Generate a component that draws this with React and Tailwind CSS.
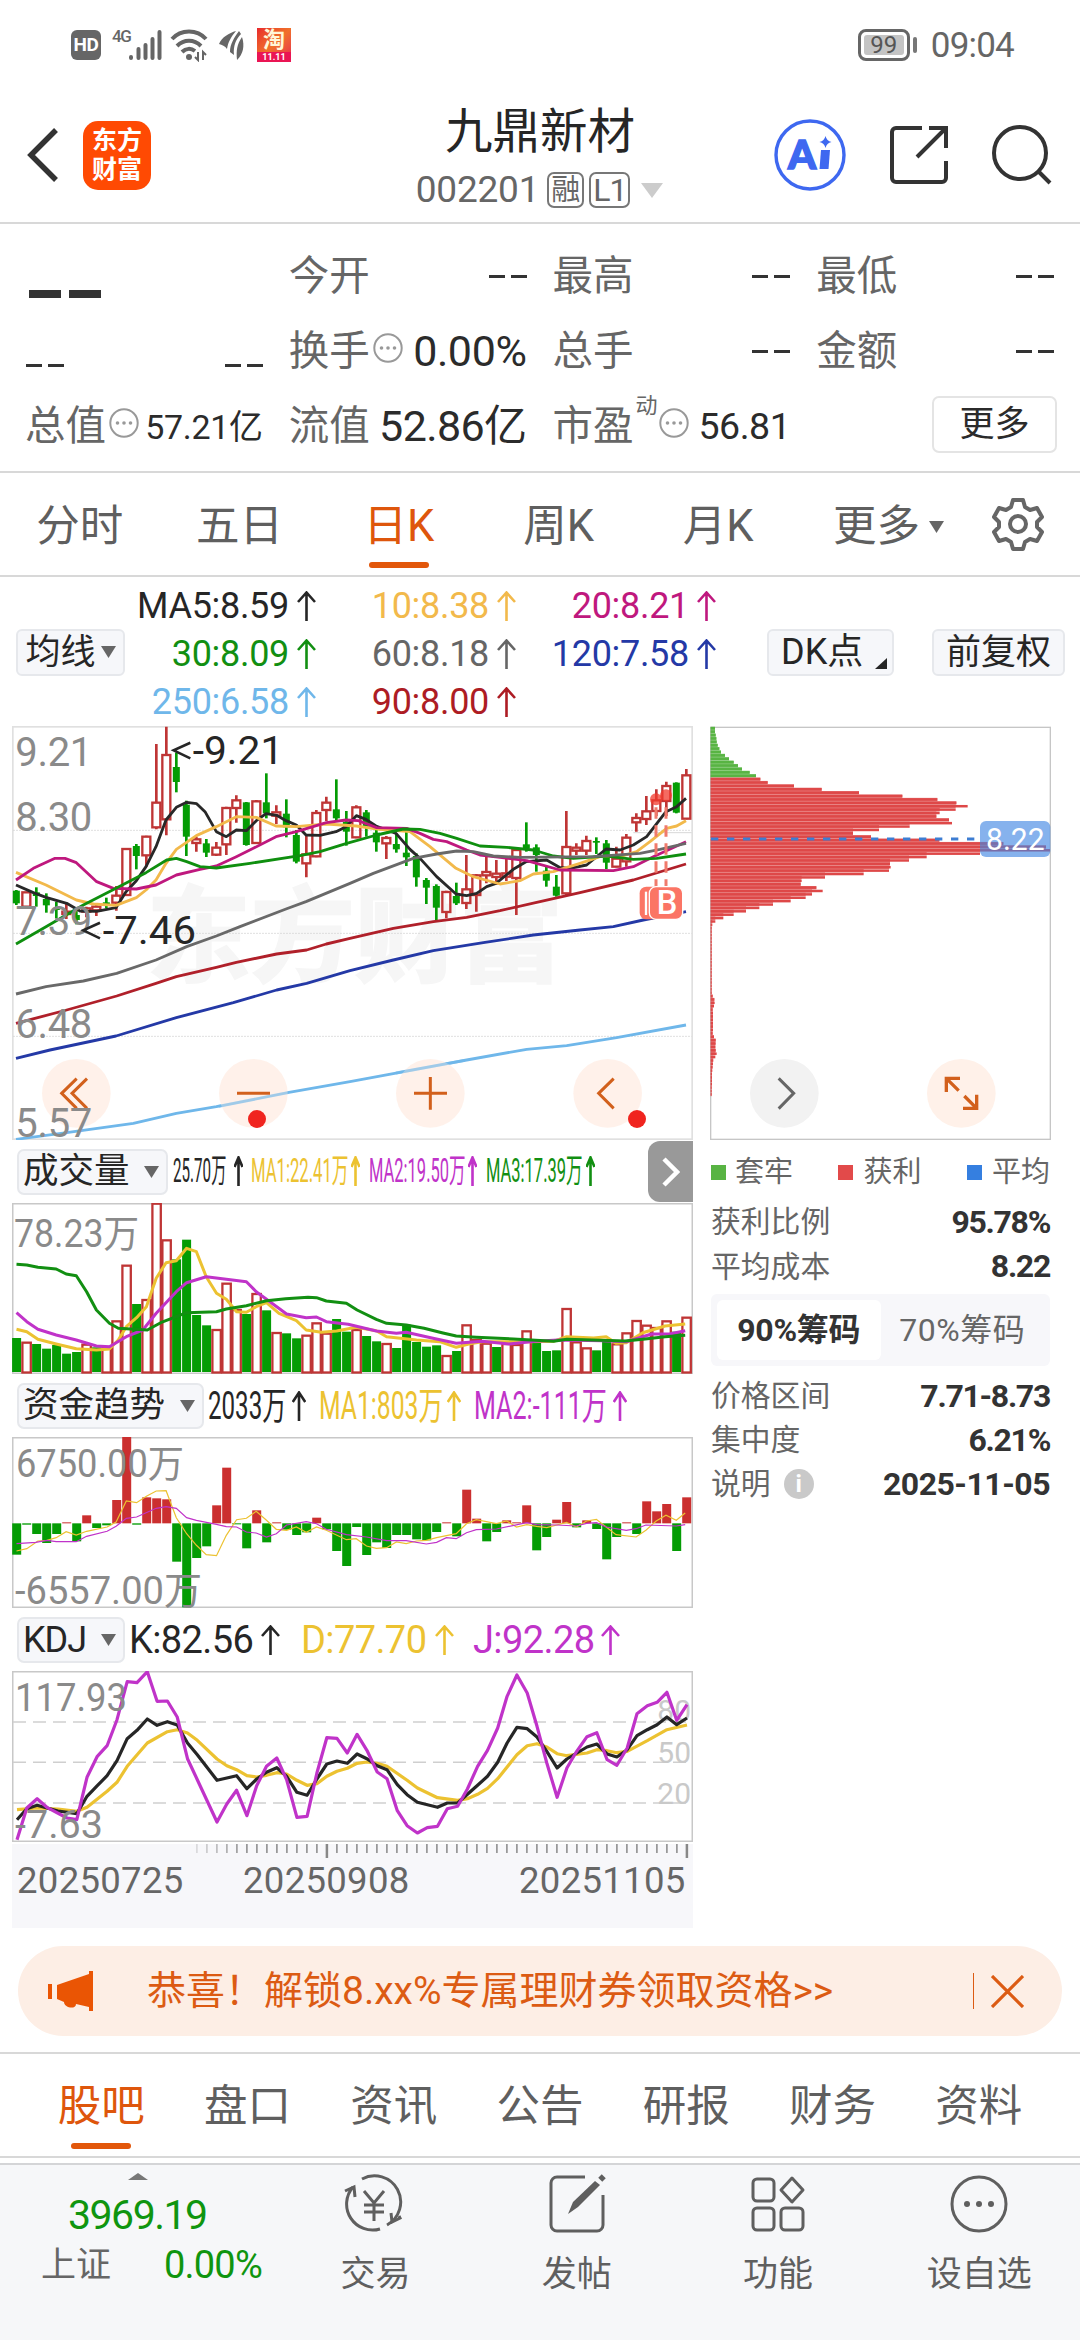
import React from 'react';
import clsx from 'clsx';

const RED = '#bf3535';
const GREEN = '#049c04';

// [up, high, bodyTop, bodyBottom, low]
const CANDLES = [
  [0, 510, 512, 550, 555], [1, 517, 517, 560, 560], [0, 502, 517, 528, 560], [0, 520, 537, 556, 578],
  [0, 545, 565, 570, 595], [1, 552, 575, 582, 597], [0, 565, 585, 600, 613], [1, 560, 565, 575, 592],
  [1, 555, 560, 571, 588], [0, 533, 547, 556, 565], [1, 498, 527, 548, 572], [1, 384, 387, 525, 527],
  [0, 372, 378, 408, 448], [1, 347, 350, 406, 440], [1, 72, 248, 322, 328], [1, 20, 105, 298, 346],
  [0, 98, 141, 186, 217], [0, 242, 254, 350, 408], [1, 350, 358, 369, 395], [0, 357, 370, 398, 411],
  [1, 366, 383, 404, 408], [1, 260, 264, 373, 405], [1, 226, 241, 264, 308], [0, 246, 247, 375, 377],
  [1, 240, 244, 369, 371], [0, 160, 247, 280, 295], [1, 256, 277, 287, 312], [0, 238, 281, 322, 352],
  [0, 330, 345, 425, 430], [1, 345, 403, 430, 472], [1, 270, 279, 409, 412], [1, 230, 248, 270, 303],
  [0, 178, 268, 295, 300], [0, 273, 305, 335, 377], [1, 256, 262, 352, 355], [0, 270, 277, 320, 350],
  [0, 325, 338, 367, 395], [1, 348, 354, 370, 417], [0, 340, 372, 388, 398], [0, 328, 398, 412, 438],
  [0, 400, 408, 472, 500], [0, 474, 480, 503, 552], [0, 493, 498, 563, 600], [1, 512, 516, 576, 595],
  [0, 488, 528, 550, 555], [1, 405, 508, 549, 567], [1, 462, 466, 525, 575], [1, 410, 456, 466, 490],
  [1, 420, 461, 471, 495], [1, 415, 460, 470, 483], [1, 388, 390, 474, 585], [0, 307, 373, 385, 395],
  [0, 373, 382, 405, 455], [0, 440, 452, 482, 500], [0, 465, 500, 527, 530], [1, 273, 381, 520, 525],
  [1, 370, 383, 392, 405], [1, 347, 363, 392, 405], [0, 352, 363, 368, 402], [0, 360, 370, 428, 447],
  [1, 380, 416, 440, 442], [1, 342, 353, 424, 440], [1, 280, 294, 307, 335], [1, 228, 274, 297, 315],
  [1, 208, 241, 273, 288], [1, 185, 198, 243, 288], [0, 187, 188, 278, 280], [1, 147, 166, 296, 298],
];

const MA_LINES = [
  ['#6fb7ea', '48,1258 200,1238 400,1210 529,1180 649,1160 850,1120 1050,1085 1200,1057 1400,1020 1580,988 1700,977 1850,953 2058,915'],
  ['#2439a6', '48,1015 150,990 348,948 529,893 700,848 830,810 920,790 1050,752 1180,720 1300,692 1450,668 1600,645 1740,630 1840,620 1930,600 2058,575'],
  ['#b0202a', '48,910 200,870 350,828 468,790 529,770 649,742 709,727 830,702 920,690 979,672 1050,655 1180,625 1300,605 1400,592 1500,572 1620,545 1740,518 1900,480 2058,432'],
  ['#282828', '48,495 100,518 138,532 200,550 240,573 290,574 348,563 378,515 409,482 438,440 468,380 498,300 529,262 560,247 590,251 615,275 649,335 679,350 709,330 739,332 769,302 798,281 830,286 858,302 889,315 918,345 960,346 1008,335 1038,320 1069,287 1098,298 1128,318 1188,340 1230,388 1260,415 1310,470 1368,522 1400,527 1430,520 1460,500 1488,490 1540,448 1578,425 1640,420 1678,442 1710,445 1760,435 1818,387 1860,390 1900,375 1940,350 1998,275 2030,260 2058,235'],
  ['#f2b94b', '48,457 138,495 229,540 280,552 348,556 409,533 438,510 468,480 498,430 529,388 589,347 649,320 709,290 769,292 828,318 889,320 979,312 1069,318 1138,328 1230,335 1290,380 1368,445 1420,470 1500,492 1560,482 1600,462 1660,455 1740,430 1800,410 1860,410 1910,395 1950,365 2000,325 2030,318 2058,302'],
  ['#bf187e', '48,480 100,445 165,415 195,415 229,428 290,485 340,505 409,507 468,495 529,465 600,448 649,438 709,410 760,385 828,350 889,335 979,308 1038,300 1075,302 1130,323 1220,325 1260,340 1300,358 1340,365 1400,390 1440,405 1500,412 1580,422 1680,450 1840,452 1900,440 1960,410 2058,365'],
  ['#0f8f0f', '48,672 138,620 250,555 348,505 438,458 500,420 529,415 560,425 600,440 649,444 750,430 900,407 960,395 1040,370 1130,345 1210,327 1260,328 1320,340 1370,355 1440,378 1520,382 1600,390 1660,408 1720,415 1820,408 1900,418 1970,415 2058,402'],
  ['#696969', '48,822 138,800 250,783 350,760 468,720 560,680 649,648 720,620 858,567 918,545 1050,490 1120,460 1240,415 1310,402 1370,393 1420,395 1480,408 1560,412 1780,410 1920,400 1980,388 2058,370'],
];

const CHIPS = [
  45, 45, 47, 49, 50, 53, 58, 63, 75, 87, 101, 114, 126, 149, 168,
  181, 203, 282, 365, 477, 607, 712, 769, 803, 767, 719, 709, 747, 756, 629, 537, 459, 513, 718, 910, 1038, 1050,
  840, 680, 627, 570, 572, 567, 491, 375, 305, 302, 349, 368, 336, 317, 272, 219, 178, 138, 101, 70, 46, 37,
  35, 35, 35, 35, 35, 35, 35, 35, 35, 35, 35, 35, 35, 35, 35, 35, 35, 35, 35, 35, 38, 43, 44, 42, 38, 39, 39, 39,
  39, 39, 39, 38, 42, 47, 47, 46, 47, 50, 46, 40, 39, 38, 37, 36, 36, 36, 36, 35, 35, 35,
];

// negative = falling day
const VOLUME = [
  -594, 605, -612, -626, -615, -641, -636, 611, -622, 618, 541, 374, -492, 477, 188, 298, -358, -299, -525, -556,
  567, 428, 507, -522, 459, -511, 576, -580, -595, 584, 547, 578, -537, -575, 567, -588, -604, 609, -624, -554,
  -606, -620, -616, 645, -633, 553, 597, 608, -621, 609, 612, 571, -606, -633, -631, 504, 604, 622, -631, -604,
  610, 577, 540, 554, 561, 541, -575, 530,
];
const VOLUME_LINES = [
  ['#ecc231', [37,568, 60,575, 85,598, 126,612, 171,626, 216,630, 245,627, 265,600, 283,560, 306,533, 328,500, 350,415, 372,368, 395,362, 418,325, 440,335, 462,410, 485,460, 507,478, 530,515, 552,517, 574,500, 597,488, 625,520, 664,542, 686,570, 720,577, 754,573, 798,562, 843,572, 866,590, 933,600, 985,605, 1022,622, 1050,612, 1080,605, 1180,605, 1240,604, 1269,590, 1330,594, 1358,590, 1380,610, 1403,608, 1440,578, 1490,558, 1535,552]],
  ['#c033c9', [37,518, 60,545, 85,568, 126,585, 171,600, 216,618, 245,620, 283,590, 320,570, 350,520, 395,455, 418,428, 462,410, 507,418, 552,425, 574,455, 597,478, 642,522, 686,533, 709,531, 731,545, 780,553, 843,573, 888,580, 910,577, 970,595, 1022,610, 1080,604, 1140,612, 1200,604, 1250,600, 1350,602, 1403,605, 1460,582, 1500,582, 1535,572]],
  ['#128f12', [37,373, 60,375, 85,382, 126,387, 148,402, 171,407, 194,455, 216,510, 245,550, 265,565, 330,570, 360,548, 418,518, 485,515, 507,507, 552,497, 597,482, 640,476, 690,472, 709,473, 731,483, 776,490, 800,510, 843,538, 866,550, 910,555, 950,565, 990,578, 1022,588, 1067,592, 1150,597, 1240,604, 1270,598, 1400,603, 1440,598, 1490,590, 1535,586]],
];

const FUND = [
  373, 283, 311, 338, 311, 276, 333, 255, 293, 285, 209, 20, 283, 201, 204, 207, 394, 531, 383, 348, 225, 112, 282,
  354, 240, 336, 276, 298, 314, 306, 262, 297, 362, 407, 290, 374, 336, 353, 314, 314, 327, 330, 305, 276, 318, 178,
  265, 333, 305, 270, 276, 225, 360, 320, 268, 215, 291, 270, 296, 387, 320, 276, 311, 213, 243, 221, 362, 201,
];
const FUND_LINES = [
  ['#ecc231', [37,362, 60,355, 85,332, 105,330, 126,322, 148,304, 171,314, 194,303, 240,290, 260,275, 283,212, 306,217, 328,198, 350,182, 372,181, 395,262, 418,310, 440,345, 462,373, 485,376, 507,315, 530,268, 552,264, 574,243, 597,270, 619,297, 642,300, 664,290, 686,306, 709,290, 731,300, 776,328, 798,325, 821,347, 843,354, 866,352, 888,335, 910,340, 933,332, 955,330, 978,322, 1022,310, 1045,280, 1067,268, 1112,280, 1135,272, 1157,290, 1180,283, 1202,288, 1225,292, 1269,276, 1291,290, 1314,272, 1336,267, 1358,290, 1380,313, 1425,320, 1447,300, 1470,272, 1492,255, 1515,270, 1535,248]],
  ['#c033c9', [37,340, 80,336, 105,330, 126,334, 171,334, 194,318, 240,303, 260,288, 283,264, 306,260, 350,234, 372,229, 395,234, 418,262, 440,270, 485,282, 507,289, 530,290, 552,305, 574,308, 597,320, 619,310, 642,284, 686,274, 709,280, 731,297, 776,313, 821,320, 866,331, 910,331, 955,341, 978,336, 1000,322, 1022,325, 1045,307, 1067,298, 1112,296, 1180,277, 1202,283, 1247,284, 1291,287, 1314,279, 1336,277, 1358,290, 1403,300, 1425,295, 1447,284, 1515,287, 1535,283]],
];

const KDJ_LINES = [
  ['#ecc231', [38,450, 83,445, 130,448, 172,455, 195,443, 240,395, 262,368, 285,320, 330,250, 375,216, 397,210, 420,220, 442,242, 486,298, 508,318, 530,330, 553,348, 575,352, 597,347, 620,339, 642,343, 665,362, 688,377, 710,372, 732,350, 755,335, 778,326, 800,311, 822,307, 845,311, 867,320, 912,362, 935,385, 980,414, 1025,422, 1047,417, 1070,404, 1092,386, 1115,357, 1158,285, 1181,258, 1203,252, 1225,262, 1248,282, 1270,288, 1315,280, 1337,270, 1360,273, 1382,279, 1405,275, 1450,243, 1494,210, 1539,196]],
  ['#262626', [38,480, 60,447, 83,437, 130,454, 172,462, 195,410, 218,378, 240,348, 262,303, 285,237, 307,212, 330,178, 352,197, 375,186, 397,196, 420,250, 442,285, 486,362, 530,348, 553,387, 575,358, 597,338, 620,324, 642,350, 665,398, 688,407, 710,358, 732,313, 755,304, 778,311, 800,283, 822,297, 845,318, 867,330, 890,375, 912,405, 935,428, 980,443, 1002,430, 1025,430, 1070,377, 1092,350, 1115,308, 1136,250, 1158,203, 1181,207, 1203,232, 1225,275, 1248,325, 1270,298, 1315,262, 1337,253, 1360,283, 1382,292, 1405,270, 1427,228, 1450,210, 1472,195, 1494,172, 1516,195, 1539,175]],
  ['#c033c9', [38,540, 60,445, 83,417, 105,443, 150,475, 172,480, 195,353, 218,290, 240,258, 262,180, 285,66, 307,69, 330,36, 352,125, 375,124, 397,172, 420,297, 442,360, 486,487, 508,433, 530,392, 553,468, 575,378, 597,320, 620,295, 642,360, 665,473, 688,470, 710,340, 732,234, 755,236, 778,280, 800,224, 822,272, 845,337, 867,357, 890,453, 912,498, 935,520, 957,504, 980,500, 1002,447, 1025,440, 1047,388, 1070,320, 1092,272, 1115,205, 1136,110, 1158,46, 1181,100, 1203,200, 1225,310, 1248,413, 1270,325, 1292,275, 1315,231, 1337,219, 1360,300, 1382,317, 1405,265, 1427,162, 1450,138, 1472,128, 1494,98, 1516,182, 1539,135]],
];

// data units -> px inside a 681x171 indicator pane
const toPx = (pts, top) => {
  const out = [];
  for (let i = 0; i < pts.length; i += 2) {
    out.push(`${(pts[i] * 0.4464 - 12).toFixed(1)},${((pts[i + 1] - top) / 3).toFixed(1)}`);
  }
  return out.join(' ');
};

const Up = ({ w = 19, h = 30 }) => (
  <svg width={w} height={h} viewBox="0 0 19 30" preserveAspectRatio="none" fill="none" stroke="currentColor" strokeWidth="2.6" className="shrink-0">
    <path d="M9.5 30V2M1 11l8.5-9.5L18 11" vectorEffect="non-scaling-stroke" />
  </svg>
);

const Down = ({ w = 15, h = 12, className }) => (
  <svg width={w} height={h} viewBox="0 0 15 12" preserveAspectRatio="none" className={clsx('shrink-0', className)} fill="currentColor">
    <path d="M0 0h15L7.5 12z" />
  </svg>
);

const Dots = () => (
  <svg width="30" height="30" viewBox="0 0 30 30" className="shrink-0 text-[#999]" fill="currentColor">
    <circle cx="15" cy="15" r="13.7" fill="none" stroke="currentColor" strokeWidth="2" />
    <circle cx="8.5" cy="15" r="1.8" /><circle cx="15" cy="15" r="1.8" /><circle cx="21.5" cy="15" r="1.8" />
  </svg>
);

const StatusBar = () => (
  <div className="h-[86px] flex items-center justify-between pl-[71px] pr-[66px] pt-1 text-[#666]">
    <div className="flex items-center">
      <span className="w-[30px] h-[30px] rounded-[6px] bg-[#666] text-white text-[19px] font-bold flex items-center justify-center tracking-[-0.5px]">HD</span>
      <span className="ml-[11px] w-[18px] -mt-[18px] text-[17px] leading-none font-medium tracking-[-1.5px]">4G</span>
      <svg width="34" height="32" viewBox="0 0 34 32" className="-ml-[2px]" stroke="#666" strokeWidth="4" strokeLinecap="round">
        <path d="M3 29v-1M10.5 29v-9M17.5 29V16M24.5 29V10M31.5 29V3" />
      </svg>
      <svg width="38" height="34" viewBox="0 0 38 34" className="ml-[8px]" fill="none" stroke="#666" strokeWidth="4">
        <path d="M2 11C11 1 27 1 36 11M7 18c7-7 17-7 24 0M12 24c4-4 9-4 13-1" />
        <circle cx="19" cy="29" r="3" fill="#666" stroke="none" />
        <path d="M28 24v8l-3-3M33 32v-8l3 3" strokeWidth="2" />
      </svg>
      <svg width="26" height="30" viewBox="0 0 26 30" className="ml-[11px]" fill="#666">
        <path d="M0 14C3 7 10 3 17 1 12 7 9 12 8 19c-2-3-5-4-8-5z" />
        <path d="M20 1C15 8 11 14 11 22l4 3C14 16 17 9 22 4z" />
        <path d="M23 7c-5 7-6 14-5 23 6-6 8-14 5-23z" />
      </svg>
      <div className="ml-[12px] w-[34px] h-[34px] bg-gradient-to-br from-[#e8252c] via-[#f0702a] to-[#e6194b] flex flex-col items-center overflow-hidden">
        <span className="text-[22px] leading-[24px] font-bold text-[#fff6d8]">淘</span>
        <span className="w-full bg-[#ea1554] text-white text-[9px] leading-[10px] text-center font-bold">11.11</span>
      </div>
    </div>
    <div className="flex items-center">
      <div className="w-[52px] h-[32px] rounded-[8px] border-[3px] border-[#666] p-[3px]">
        <div className="w-full h-full bg-[#c4c4c4] rounded-[3px] text-[24px] leading-none flex items-center justify-center text-[#555]">99</div>
      </div>
      <span className="w-[4px] h-[16px] bg-[#777] ml-[3px] rounded-sm" />
      <span className="ml-[14px] text-[35px] leading-none tracking-[-0.8px]">09:04</span>
    </div>
  </div>
);

const Header = () => (
  <header className="h-[138px] border-b-2 border-[#d8d8d8] flex items-center pl-[27px] pr-[28px] relative">
    <svg width="31" height="54" viewBox="0 0 31 54" fill="none" stroke="#333" strokeWidth="5.5" className="mt-[2px]">
      <path d="M29 2L4 27l25 25" />
    </svg>
    <div className="ml-[25px] mt-[2px] w-[68px] h-[69px] rounded-[15px] bg-[#ff4a03] text-white font-bold text-[25px] leading-[29px] flex flex-col items-center justify-center">
      <span>东方</span><span>财富</span>
    </div>
    <div className="absolute left-[340px] w-[400px] top-[17px] flex flex-col items-center">
      <h1 className="text-[47.5px] leading-[58px] text-[#262626]">九鼎新材</h1>
      <div className="flex items-center text-[#666] h-[58px] -ml-[1px]">
        <span className="text-[37px] tracking-[-0.2px]">002201</span>
        <span className="ml-[8px] w-[37px] h-[36px] rounded-[7px] border-2 border-[#777] text-[29px] leading-none flex items-center justify-center">融</span>
        <span className="ml-[5px] w-[41px] h-[36px] rounded-[7px] border-2 border-[#777] text-[32px] leading-none flex items-center justify-center tracking-[-1px]">L1</span>
        <Down w={22} h={15} className="ml-[11px] text-[#ccc]" />
      </div>
    </div>
    <div className="ml-auto flex items-center gap-[43px] pt-[2px]">
      <svg width="72" height="72" viewBox="0 0 72 72">
        <circle cx="36" cy="36" r="34" fill="none" stroke="#3e68f0" strokeWidth="3.4" />
        <text x="14" y="50" fontSize="40" fontWeight="900" fontFamily="Lato, sans-serif" fill="#3e68f0" stroke="#3e68f0" strokeWidth="1.5">A</text>
        <path d="M47 31h9l-1.500 19h-9z" fill="#3e68f0" />
        <path d="M51.500 17q1.200 4.800 6 6-4.800 1.200-6 6-1.200-4.800-6-6 4.800-1.200 6-6z" fill="#3e68f0" />
      </svg>
      <svg width="60" height="60" viewBox="0 0 60 60" fill="none" stroke="#333" strokeWidth="4">
        <path d="M33 3H7a4 4 0 0 0-4 4v46a4 4 0 0 0 4 4h46a4 4 0 0 0 4-4V36M40 3h17v20M57 3L28 32" />
      </svg>
      <svg width="60" height="60" viewBox="0 0 60 60" fill="none" stroke="#333" strokeWidth="4">
        <circle cx="28" cy="28" r="26" /><path d="M46 46l12 12" />
      </svg>
    </div>
  </header>
);

const Label = ({ children }) => <span className="text-[40.5px] text-[#666] -ml-px">{children}</span>;
const Dash = () => <span className="flex gap-[6px]"><i className="w-[16px] h-[3px] bg-[#333]" /><i className="w-[16px] h-[3px] bg-[#333]" /></span>;

const Quote = () => (
  <section className="h-[249px] border-b-2 border-[#d8d8d8] px-[26px] pt-[15px] grid grid-cols-4 grid-rows-[75px_75px_75px] gap-x-[27px] content-start text-[#2b2b2b] leading-none whitespace-nowrap [&>div]:flex [&>div]:items-center">
    <div><span className="flex gap-[8px] ml-[3px] mt-[35px]"><i className="w-[32px] h-[8px] bg-[#333]" /><i className="w-[32px] h-[8px] bg-[#333]" /></span></div>
    <div className="justify-between"><Label>今开</Label><Dash /></div>
    <div className="justify-between"><Label>最高</Label><Dash /></div>
    <div className="justify-between"><Label>最低</Label><Dash /></div>

    <div className="justify-between pt-[28px]"><Dash /><Dash /></div>
    <div className="justify-between">
      <div className="flex items-center gap-[3px]"><Label>换手</Label><div className="-mt-[8px]"><Dots /></div></div>
      <span className="text-[43px] tracking-[-0.4px]">0.00%</span>
    </div>
    <div className="justify-between"><Label>总手</Label><Dash /></div>
    <div className="justify-between"><Label>金额</Label><Dash /></div>

    <div className="justify-between">
      <div className="flex items-center gap-[3px]"><Label>总值</Label><div className="-mt-[8px]"><Dots /></div></div>
      <span className="text-[34px] tracking-[-0.3px]">57.21亿</span>
    </div>
    <div className="justify-between"><Label>流值</Label><span className="text-[43px] tracking-[-0.6px]">52.86亿</span></div>
    <div className="justify-between">
      <div className="flex items-center"><Label>市盈</Label><span className="text-[22px] text-[#666] -mt-[42px] ml-[2px]">动</span><div className="-mt-[8px] ml-px"><Dots /></div></div>
      <span className="text-[37.5px] tracking-[-0.5px]">56.81</span>
    </div>
    <div className="justify-end">
      <button className="w-[125px] h-[57px] -mr-[3px] -mt-[4px] rounded-[7px] border-2 border-[#e4e4e4] text-[35px] leading-none flex items-center justify-center">更多</button>
    </div>
  </section>
);

const PeriodTabs = () => (
  <nav className="h-[104px] border-b-2 border-[#d8d8d8] flex items-center text-[43.5px] leading-none text-[#5f5f5f]">
    {['分时', '五日', '日K', '周K', '月K'].map((t) => (
      <div key={t} className={clsx('w-[159.6px] h-full flex items-center justify-center relative pt-[6px]', t === '日K' && 'text-[#de560c]')}>
        {t}
        {t === '日K' && <i className="absolute bottom-[7px] w-[60px] h-[6px] rounded-full bg-[#e2570b]" />}
      </div>
    ))}
    <div className="ml-[35px] pt-[6px] flex items-center gap-[9px]">更多<Down className="text-[#666]" /></div>
    <svg width="54" height="54" viewBox="0 0 54 54" className="ml-auto mr-[35px]" fill="none" stroke="#666" strokeWidth="4" strokeLinejoin="round">
      <path d="M22 3h10l2 7 5 3 7-2 5 9-5 5v5l5 5-5 9-7-2-5 3-2 7H22l-2-7-5-3-7 2-5-9 5-5v-5l-5-5 5-9 7 2 5-3z" />
      <circle cx="27" cy="27" r="8" />
    </svg>
  </nav>
);

const MAS = [
  ['MA5:8.59', 'text-[#262626]'], ['10:8.38', 'text-[#f2b94b]'], ['20:8.21', 'text-[#bf187e]'],
  ['30:8.09', 'text-[#128f12]'], ['60:8.18', 'text-[#666]'], ['120:7.58', 'text-[#2439a6]'],
  ['250:6.58', 'text-[#6fb7ea]'], ['90:8.00', 'text-[#ad1c24]'],
];

const MaBar = () => (
  <div className="h-[150px] flex items-center pl-[16px] pr-[15px] leading-none text-[#262626]">
    <button className="w-[109px] h-[47px] rounded-[6px] bg-[#f6f7fa] border-2 border-[#e6e8ec] flex items-center justify-center gap-[5px] text-[35px] leading-none">均线<Down className="text-[#666]" /></button>
    <div className="grid grid-cols-[191px_200px_200px] auto-rows-[48px] pt-[6px]">
      {MAS.map(([t, c]) => (
        <div key={t} className={clsx('flex items-center justify-end gap-[8px] text-[36px] tracking-[-0.3px] -mt-[3px]', c)}>{t}<Up /></div>
      ))}
    </div>
    <button className="ml-[51px] w-[127px] h-[47px] rounded-[6px] bg-[#f6f7fa] border-2 border-[#e6e8ec] text-[36px] leading-none flex items-center pl-[12px] relative whitespace-nowrap">
      DK点
      <svg width="12" height="11" className="absolute right-[5px] bottom-[5px]"><path d="M12 0v11H0z" fill="#262626" /></svg>
    </button>
    <button className="ml-auto w-[133px] h-[47px] rounded-[6px] bg-[#f6f7fa] border-2 border-[#e6e8ec] text-[35px] leading-none flex items-center justify-center whitespace-nowrap">前复权</button>
  </div>
);

const KChart = () => (
  <svg width="681" height="414" viewBox="36 18 2043 1242" fill="none">
    <rect x="38.500" y="20.500" width="2038" height="1237" stroke="#e0e0e0" strokeWidth="5" fill="#fff" />
    <text x="440" y="762" fontSize="312" fontWeight="700" fill="#f6f6f6" stroke="#f6f6f6" strokeWidth="8">东方财富</text>
    {[331, 640, 949].map((y) => <path key={y} d={`M40 ${y}H2075`} stroke="#cfcfcf" strokeWidth="3" strokeDasharray="4 5" />)}
    <path d="M1900 338H2075" stroke="#d8d8d8" strokeWidth="3" />
    {CANDLES.map(([up, hi, top, bot, lo], i) => {
      const x = 49 + i * 30;
      return up ? (
        <g key={i} stroke={RED} strokeWidth="7">
          <path d={`M${x} ${hi}V${top}M${x} ${bot}V${lo}`} strokeWidth="8" />
          <rect x={x - 12} y={top} width="24" height={bot - top} />
        </g>
      ) : (
        <g key={i} fill={GREEN}>
          <rect x={x - 4} y={hi} width="8" height={lo - hi} />
          <rect x={x - 10.5} y={top} width="21" height={bot - top} />
        </g>
      );
    })}
    {MA_LINES.map(([c, pts]) => <polyline key={c} points={pts} stroke={c} strokeWidth="8.500" strokeLinejoin="round" />)}
    <g fill="#ffefe6" fillOpacity="0.85">
      <circle cx="229" cy="1120" r="103" /><circle cx="760" cy="1120" r="103" />
      <circle cx="1291" cy="1120" r="103" /><circle cx="1823" cy="1120" r="103" />
    </g>
    <path d="M656 1159L864 1118M1188 1059L1394 1021" stroke="#6fb7ea" strokeWidth="8.500" strokeOpacity="0.600" />
    <g stroke="#d2601c" strokeWidth="9">
      <path d="M230 1076l-45 44 45 45M261 1076l-45 44 45 45" />
      <path d="M711 1120h99" />
      <path d="M1242 1120h99M1291 1071v98" />
      <path d="M1841 1076l-45 44 45 45" />
    </g>
    <circle cx="771" cy="1197" r="27" fill="#f0241f" />
    <circle cx="1911" cy="1197" r="27" fill="#f0241f" />

    <g fill="#8a8a8a" fontSize="120" letterSpacing="-1">
      <text x="46" y="138">9.21</text>
      <text x="46" y="334">8.30</text>
      <text x="46" y="645">7.39</text>
      <text x="46" y="953">6.48</text>
      <text x="46" y="1251">5.57</text>
    </g>
    <g fill="#262626" fontSize="118">
      <text x="578" y="132" textLength="272" lengthAdjust="spacingAndGlyphs">-9.21</text>
      <text x="308" y="672" textLength="280" lengthAdjust="spacingAndGlyphs">-7.46</text>
    </g>
    <path d="M571 68l-50 23 50 24M300 608l-50 23 50 24" stroke="#262626" strokeWidth="8" />

    <g stroke="#f07a6c" strokeWidth="9" strokeDasharray="34 20">
      <path d="M1968 262V500M1998 262V500" />
    </g>
    <g fill="#f2392c" fillOpacity="0.75"><circle cx="1968" cy="238" r="18" /><circle cx="1998" cy="226" r="18" /></g>
    <rect x="1919" y="500" width="98" height="98" rx="20" fill="#fb7565" />
    <path d="M1938 515v70" stroke="#fff" strokeWidth="7" />
    <rect x="1948" y="500" width="100" height="98" rx="20" fill="#fb7565" stroke="#fff" strokeWidth="4" />
    <text x="1970" y="583" fontSize="98" fontWeight="500" fill="#fff">B</text>
  </svg>
);

const ChipChart = () => (
  <svg width="342" height="414" viewBox="30 18 1026 1242" fill="none">
    <rect x="32" y="22" width="1019" height="1236" stroke="#c6c6c6" strokeWidth="4" />
    {CHIPS.map((w, i) => (
      <g key={i} fill={i < 15 ? '#58b443' : '#de4848'}>
        <rect x="32" y={20 + i * 10.17} width={Math.min(w, CHIPS[i + 1] || w) - 32} height="10.170" fillOpacity="0.75" />
        <rect x="32" y={21 + i * 10.17} width={w - 32} height="7.500" />
      </g>
    ))}
    <path d="M33 357H838" stroke="#3d7dd2" strokeWidth="9" strokeDasharray="22 26" />
    <rect x="840" y="303" width="211" height="108" rx="18" fill="#3f85e2" fillOpacity="0.630" />
    <text x="858" y="390" fontSize="94" textLength="176" lengthAdjust="spacingAndGlyphs" fill="#fff">8.22</text>
    <circle cx="253" cy="1120" r="103" fill="#f2f2f2" />
    <path d="M236 1075l45 45-45 46" stroke="#666" strokeWidth="9" />
    <circle cx="784" cy="1120" r="103" fill="#fff1e9" />
    <path d="M739 1116v-41h41M742 1078l34 34M830 1124v41h-41M827 1162l-34-34" stroke="#d2601c" strokeWidth="10" />
  </svg>
);

const Pane = ({ children }) => (
  <svg width="681" height="171" viewBox="0 0 681 171" fill="none" className="block">
    <rect x="0.750" y="0.750" width="679.500" height="169.500" stroke="#c8c8c8" strokeWidth="1.500" />
    {children}
  </svg>
);

const Select = ({ children, className }) => (
  <button className={clsx('h-[46px] rounded-[7px] bg-[#f6f7fa] border-2 border-[#e6e8ec] flex items-center justify-between pl-[4px] pr-[7px] text-[35.5px] leading-none whitespace-nowrap', className)}>
    {children}<Down className="text-[#666]" />
  </button>
);

// narrow text: keeps the glyph height while squeezing the width
const Squeezed = ({ children, scale, className, arrow = 14 }) => (
  <div className={clsx('flex items-center justify-between shrink-0', className)}>
    <div className="w-0"><span className={clsx('inline-block origin-left whitespace-nowrap', scale)}>{children}</span></div>
    <Up w={arrow} h={30} />
  </div>
);

const VolumePane = () => (
  <div>
    <div className="h-[63px] flex items-center pl-[5px] text-[#262626] leading-none relative">
      <Select className="w-[151px]">成交量</Select>
      <div className="flex text-[33px] -mt-[2px]">
        <Squeezed className="w-[70px] ml-[5px]" scale="scale-x-[0.46]" arrow={9}>25.70万</Squeezed>
        <Squeezed className="w-[109px] ml-[8px] text-[#ecc231]" scale="scale-x-[0.505]" arrow={9}>MA1:22.41万</Squeezed>
        <Squeezed className="w-[108px] ml-[9px] text-[#c033c9]" scale="scale-x-[0.5]" arrow={9}>MA2:19.50万</Squeezed>
        <Squeezed className="w-[109px] ml-[9px] text-[#128f12]" scale="scale-x-[0.5]" arrow={9}>MA3:17.39万</Squeezed>
      </div>
      <div className="absolute right-0 top-[1px] w-[45px] h-[61px] rounded-l-[12px] bg-[#999] flex items-center justify-center">
        <svg width="18" height="30" viewBox="0 0 18 30" fill="none" stroke="#fff" strokeWidth="4.500"><path d="M2 2l13 13L2 28" /></svg>
      </div>
    </div>
    <Pane>
      {VOLUME.map((v, i) => {
        const y = (Math.abs(v) - 189) / 3;
        const x = 4.6 + i * 10;
        return v > 0
          ? <rect key={i} x={x - 4.2} y={y + 1} width="8.400" height={168.500 - y} stroke={RED} strokeWidth="2.300" />
          : <rect key={i} x={x - 4.5} y={y} width="9" height={169 - y} fill={GREEN} />;
      })}
      {VOLUME_LINES.map(([c, p]) => <polyline key={c} points={toPx(p, 189)} stroke={c} strokeWidth="3" strokeLinejoin="round" />)}
      <text x="2" y="44" fontSize="38" fill="#8a8a8a" textLength="125" lengthAdjust="spacingAndGlyphs">78.23万</text>
    </Pane>
  </div>
);

const FundPane = () => (
  <div>
    <div className="h-[63px] flex items-center pl-[5px] text-[#262626] leading-none">
      <Select className="w-[187px]">资金趋势</Select>
      <div className="flex text-[38px]">
        <Squeezed className="w-[98px] ml-[4px]" scale="scale-x-[0.635]">2033万</Squeezed>
        <Squeezed className="w-[142px] ml-[13px] text-[#ecc231]" scale="scale-x-[0.65]">MA1:803万</Squeezed>
        <Squeezed className="w-[153px] ml-[13px] text-[#c033c9]" scale="scale-x-[0.66]">MA2:-111万</Squeezed>
      </div>
    </div>
    <Pane>
      {FUND.map((v, i) => {
        const up = v < 279;
        return <rect key={i} x={i * 10 + 0.2} y={(Math.min(v, 279) - 20) / 3} width="9" height={Math.abs(279 - v) / 3} fill={up ? '#cb2f2f' : GREEN} />;
      })}
      {FUND_LINES.map(([c, p]) => <polyline key={c} points={toPx(p, 20)} stroke={c} strokeWidth="1.200" />)}
      <g fill="#8a8a8a" fontSize="38">
        <text x="4" y="40" textLength="168" lengthAdjust="spacingAndGlyphs">6750.00万</text>
        <text x="3" y="167" textLength="187" lengthAdjust="spacingAndGlyphs">-6557.00万</text>
      </g>
    </Pane>
  </div>
);

const KdjPane = () => (
  <div>
    <div className="h-[63px] flex items-center pl-[5px] text-[#262626] leading-none text-[38px] tracking-[-0.6px]">
      <Select className="w-[108px]"><span className="text-[36px] tracking-[-1px]">KDJ</span></Select>
      <div className="flex items-center justify-between w-[151px] ml-[4px]">K:82.56<Up /></div>
      <div className="flex items-center justify-between w-[153px] ml-[21px] text-[#ecc231]">D:77.70<Up /></div>
      <div className="flex items-center justify-between w-[147px] ml-[19px] text-[#c033c9]">J:92.28<Up /></div>
    </div>
    <Pane>
      {[187, 308, 430].map((v) => <path key={v} d={`M1 ${(v - 34) / 3}H680`} stroke="#cfcfcf" strokeWidth="1.500" strokeDasharray="13 7" />)}
      <g fill="#c9c9c9" fontSize="30" textAnchor="end">
        <text x="679" y="50">80</text><text x="679" y="92">50</text><text x="679" y="133">20</text>
      </g>
      {KDJ_LINES.map(([c, p]) => <polyline key={c} points={toPx(p, 34)} stroke={c} strokeWidth="3.200" strokeLinejoin="round" />)}
      <g fill="#8a8a8a" fontSize="38">
        <text x="3" y="40" textLength="112" lengthAdjust="spacingAndGlyphs">117.93</text>
        <text x="3" y="167" textLength="88" lengthAdjust="spacingAndGlyphs">-7.63</text>
      </g>
    </Pane>
    <div className="mt-[2px] h-[84px] bg-[#f7f7fa]">
      <svg width="681" height="16" className="block" stroke="#888">
        {Array.from({ length: 50 }, (_, i) => (
          <path key={i} d={`M${184.900 + i * 10} 0v${i === 13 || i === 49 ? 14 : 9}`} strokeOpacity={i < 5 ? 0.3 + i * 0.15 : 1} strokeWidth={i === 13 || i === 49 ? 2.500 : 1.500} />
        ))}
      </svg>
      <div className="flex pl-[5px] -mt-px text-[36.5px] leading-[44px] tracking-[0.3px] text-[#666]">
        <span className="w-[226px]">20250725</span>
        <span className="w-[276px]">20250908</span>
        <span>20251105</span>
      </div>
    </div>
  </div>
);

const Row = ({ label, value }) => (
  <div className="h-[44.300px] flex items-center justify-between">
    <span className="text-[29.800px] text-[#666] flex items-center gap-[13px]">{label}</span>
    <span className="text-[32px] font-bold text-[#333] tracking-[-1.300px]">{value}</span>
  </div>
);

const ChipInfo = () => (
  <div className="pl-px w-[340px] leading-none">
    <div className="h-[60px] pt-[4px] flex items-center justify-between text-[29px] text-[#666]">
      <span className="flex items-center gap-[9px]"><i className="w-[15px] h-[15px] bg-[#58b443]" />套牢</span>
      <span className="flex items-center gap-[10px]"><i className="w-[15px] h-[15px] bg-[#e24a4a]" />获利</span>
      <span className="flex items-center gap-[10px]"><i className="w-[15px] h-[15px] bg-[#357fe0]" />平均</span>
    </div>
    <Row label="获利比例" value="95.78%" />
    <Row label="平均成本" value="8.22" />
    <div className="mt-[5px] mb-[8px] h-[72px] rounded-[6px] bg-[#f7f7fa] p-[6px] grid grid-cols-2 text-[32px]">
      <span className="rounded-[6px] bg-white font-bold text-[#333] flex items-center justify-center whitespace-nowrap tracking-[-0.300px]">90%筹码</span>
      <span className="text-[#666] flex items-center justify-center whitespace-nowrap tracking-[0.500px]">70%筹码</span>
    </div>
    <Row label="价格区间" value="7.71-8.73" />
    <Row label="集中度" value="6.21%" />
    <Row
      label={<>说明<i className="w-[30px] h-[30px] rounded-full bg-[#c9c9c9] text-white not-italic text-[24px] font-bold flex items-center justify-center">i</i></>}
      value={<span className="tracking-[-0.500px]">2025-11-05</span>}
    />
  </div>
);

const Banner = () => (
  <div className="mx-[18px] h-[90px] rounded-full bg-[#fdeee5] text-[#dc5b13] flex items-center pl-[30px] pr-[38px] text-[39px] leading-none">
    <svg width="46" height="40" viewBox="0 0 46 40" fill="#ea5504">
      <path d="M0 13h4v15H0zM9 14L41 3V0h4v40h-4v-4l-13-3c0 6-12 4-12-2l-7-3z" />
    </svg>
    <span className="ml-[53px] whitespace-nowrap">恭喜！解锁8.xx%专属理财券领取资格&gt;&gt;</span>
    <i className="ml-auto w-[1.500px] h-[36px] bg-[#dc5b13]" />
    <svg width="33" height="33" viewBox="0 0 33 33" className="ml-[17px]" stroke="#dc5b13" strokeWidth="3.200"><path d="M1 1l31 31M32 1L1 32" /></svg>
  </div>
);

const SectionTabs = () => (
  <nav className="mt-[16px] h-[106px] border-y-2 border-[#d8d8d8] flex px-[28px] text-[43.500px] leading-none text-[#5f5f5f]">
    {['股吧', '盘口', '资讯', '公告', '研报', '财务', '资料'].map((t, i) => (
      <div key={t} className={clsx('flex-1 flex items-center justify-center relative pt-[4px]', i === 0 && 'text-[#de560c]')}>
        {t}
        {i === 0 && <i className="absolute bottom-[7px] w-[60px] h-[6px] rounded-full bg-[#e2570b]" />}
      </div>
    ))}
  </nav>
);

const NAV = [
  ['交易', <>
    <path d="M19 6a26 26 0 0 1 25 46M37 56A26 26 0 0 1 10 14" /><path d="M2 18l9-4 1 10M56 43l1 2-8 4-1-9" />
    <path d="M21 18l10 12 10-12M31 30v18M21 32h20M21 39h20" /></>],
  ['发帖', <>
    <path d="M40 4H12a6 6 0 0 0-6 6v42a6 6 0 0 0 6 6h40a6 6 0 0 0 6-6V22" />
    <path d="M23 41l5-12L50 8l5 4-22 22z" fill="#5f5f5f" stroke="none" /><path d="M55 3l4 4" strokeWidth="5" /></>],
  ['功能', <>
    <rect x="7" y="6" width="21" height="22" rx="4" /><rect x="7" y="35" width="21" height="22" rx="4" /><rect x="35" y="35" width="22" height="22" rx="4" />
    <path d="M46 5l11 12-11 12-11-12z" strokeLinejoin="round" /></>],
  ['设自选', <>
    <circle cx="32" cy="31" r="27" /><g fill="#5f5f5f" stroke="none"><circle cx="20" cy="31" r="3" /><circle cx="32" cy="31" r="3" /><circle cx="44" cy="31" r="3" /></g></>],
];

const BottomBar = () => (
  <footer className="mt-[5px] flex-1 border-t-2 border-[#d4d5d7] bg-[#f6f7f9] flex leading-none">
    <div className="w-[275px] text-[#0f950f]">
      <Down w={20} h={7} className="ml-[128px] mt-[8px] rotate-180 text-[#777]" />
      <div className="text-[41px] tracking-[-1.500px] pl-[68px] mt-[15px]">3969.19</div>
      <div className="flex items-center mt-[10px] pl-[41px]">
        <span className="text-[35px] text-[#666]">上证</span>
        <span className="text-[38px] tracking-[-0.800px] ml-[53px]">0.00%</span>
      </div>
    </div>
    <div className="flex-1 flex">
      {NAV.map(([t, icon]) => (
        <div key={t} className="w-[201.300px] flex flex-col items-center pt-[8px] text-[35px] text-[#5f5f5f]">
          <svg width="64" height="64" viewBox="0 0 64 64" fill="none" stroke="#5f5f5f" strokeWidth="3">{icon}</svg>
          <span className="mt-[20px]">{t}</span>
        </div>
      ))}
    </div>
  </footer>
);

export default function App() {
  return (
    <div className="w-[1080px] h-[2340px] bg-white flex flex-col overflow-hidden font-[Roboto,'Noto_Sans_CJK_SC',sans-serif] [&>*]:shrink-0">
      <StatusBar />
      <Header />
      <Quote />
      <PeriodTabs />
      <MaBar />
      <main className="h-[1220px] flex pl-[12px] -mt-px">
        <div className="w-[681px]">
          <div className="h-[414px]"><KChart /></div>
          <VolumePane />
          <FundPane />
          <KdjPane />
        </div>
        <div className="ml-[17px] w-[342px]">
          <div className="h-[414px]"><ChipChart /></div>
          <ChipInfo />
        </div>
      </main>
      <Banner />
      <SectionTabs />
      <BottomBar />
    </div>
  );
}
